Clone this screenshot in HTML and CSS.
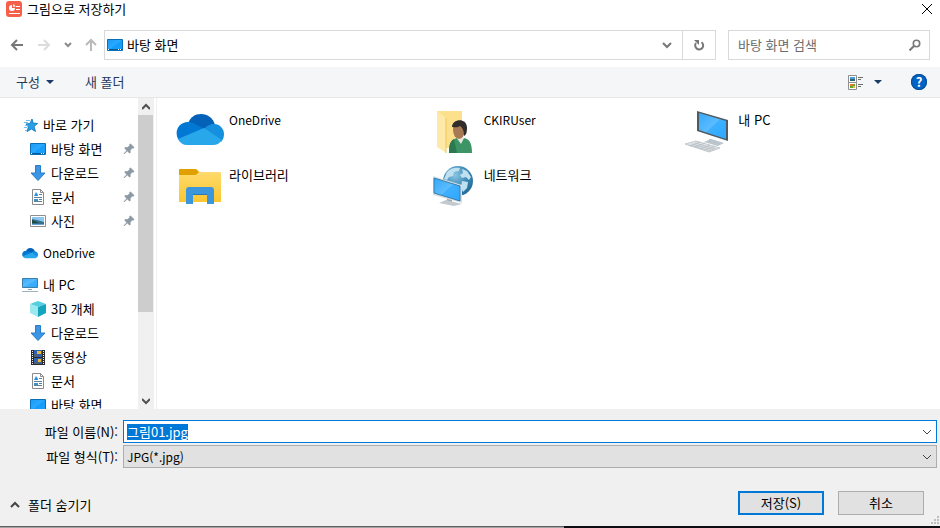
FILE: index.html
```html
<!DOCTYPE html>
<html lang="ko">

<head>
    <meta charset="UTF-8">
    <meta name="viewport" content="width=device-width, initial-scale=1.0">
    <title>그림으로 저장하기</title>
    <link rel="stylesheet" href="styles.css">
</head>

<body>
    <!-- shared icons -->
    <svg class="defs" width="0" height="0">
        <linearGradient id="blue" x1="0" y1="0" x2="1" y2="1">
            <stop offset="0" stop-color="#1a9bf5" />
            <stop offset=".5" stop-color="#2aa9ff" />
            <stop offset=".51" stop-color="#159dfb" />
            <stop offset="1" stop-color="#1a9fff" />
        </linearGradient>
        <linearGradient id="screen" x1="0" y1="0" x2="1" y2="1">
            <stop offset="0" stop-color="#35a9fa" />
            <stop offset=".5" stop-color="#5cbcff" />
            <stop offset=".51" stop-color="#3fb0ff" />
            <stop offset="1" stop-color="#2ea7ff" />
        </linearGradient>
        <linearGradient id="folder" x1="0" y1="0" x2="0" y2="1">
            <stop offset="0" stop-color="#ffdc72" />
            <stop offset="1" stop-color="#fbc62f" />
        </linearGradient>
        <radialGradient id="globe" cx=".4" cy=".3" r=".8">
            <stop offset="0" stop-color="#8cc6e3" />
            <stop offset=".5" stop-color="#3f8bb7" />
            <stop offset="1" stop-color="#1d6491" />
        </radialGradient>
        <symbol id="desktop" viewBox="0 0 16 16">
            <path d="M.5 2.500h15v11H.5z" fill="url(#blue)" stroke="#0870b8" />
            <path d="M1 12h14v1H1z" fill="#075a96" />
            <path d="M1 12h1v1H1zM11 12h1v1h-1zM13 12h1v1h-1z" fill="#fff" />
        </symbol>
        <symbol id="down" viewBox="0 0 16 16">
            <path d="M5.500.5h5v7.500h4.500L8 15.500 1 8h4.500z" fill="#3a96e4" stroke="#2b7cc4" />
        </symbol>
        <symbol id="doc" viewBox="0 0 16 16">
            <path d="M2.500.5h8l3 3v12h-11z" fill="#fff" stroke="#8b8b8b" />
            <path d="M10.500.5v3h3" fill="none" stroke="#8b8b8b" />
            <path d="M4 7l2-4 2 3v1z" fill="#2a8fd8" />
            <path d="M9 5.500h3M4 8.500h8M9 10.500h3M4 12.500h8" stroke="#5b7f9c" />
            <path d="M4 10h4v2H4z" fill="#3b93c9" />
        </symbol>
        <symbol id="pin" viewBox="0 0 12 12">
            <path d="M7.500.5l4 4-1 1-1-.2-2 2 .2 2.200-1.200 1L4.300 8.300 1.500 11H.8v-.8L3.500 7.500 1.300 5.300l1-1.200 2.200.2 2-2-.2-1z" fill="#8d9aa5" />
        </symbol>
        <symbol id="cloud" viewBox="0 0 48 32">
            <path d="M12 11C14 4 19 1 25 1c7 0 12 4 14 11L28 17z" fill="#0461b8" />
            <path d="M2 26C-2 18 3 9 12 9c4 0 6 1 9 3l9 5L4 28z" fill="#0078d4" />
            <path d="M28 16c2-3 6-5 10-5 6 0 10 5 10 10 0 3-1 6-3 8z" fill="#1490df" />
            <path d="M2 26l26-11 18 12c-2 3-5 5-9 5H11c-4 0-7-2-9-6z" fill="#28a8ea" />
        </symbol>
    </svg>

    <header class="titlebar">
        <svg class="app-icon" width="16" height="16" viewBox="0 0 16 16">
            <rect width="16" height="16" rx="3" fill="#f5604b" />
            <path d="M6 4a3 3 0 1 0 3 3H6z" fill="#fff" />
            <path d="M7 3a3 3 0 0 1 2.500 3H7z" fill="#ffd9d2" />
            <path d="M10 5.500h4M10 8.500h4M3 12.500h11" stroke="#fff" />
        </svg>
        <h1>그림으로 저장하기</h1>
        <button type="button" class="icon-btn" aria-label="닫기">
            <svg width="12" height="12" viewBox="0 0 12 12"><path d="M1 1l10 10M11 1L1 11" stroke="#000" fill="none" /></svg>
        </button>
    </header>

    <div class="navbar">
        <div class="arrows">
            <button type="button" class="icon-btn" aria-label="뒤로">
                <svg width="14" height="14" viewBox="0 0 14 14"><path d="M13 7H2M7 2L2 7l5 5" stroke="#777" stroke-width="2" fill="none" /></svg>
            </button>
            <button type="button" class="icon-btn" aria-label="앞으로">
                <svg width="14" height="14" viewBox="0 0 14 14"><path d="M1 7h11M7 2l5 5-5 5" stroke="#dcdcdc" stroke-width="2" fill="none" /></svg>
            </button>
            <button type="button" class="icon-btn" aria-label="최근 위치">
                <svg width="8" height="8" viewBox="0 0 8 8"><path d="M1 2l3 3 3-3" stroke="#8a8a8a" stroke-width="2" fill="none" /></svg>
            </button>
            <button type="button" class="icon-btn" aria-label="위로">
                <svg width="12" height="14" viewBox="0 0 12 14"><path d="M6 13V2M1 7l5-5 5 5" stroke="#b9b9b9" stroke-width="2" fill="none" /></svg>
            </button>
        </div>
        <div class="address">
            <svg width="16" height="16"><use href="#desktop" /></svg>
            <span class="path">바탕 화면</span>
            <button type="button" class="icon-btn drop" aria-label="이전 위치">
                <svg width="10" height="10" viewBox="0 0 10 10"><path d="M1 3l4 4 4-4" stroke="#777" stroke-width="2" fill="none" /></svg>
            </button>
            <button type="button" class="icon-btn refresh" aria-label="새로 고침">
                <svg width="12" height="12" viewBox="0 0 12 12"><path d="M8.500 3.200A4 4 0 1 1 3 4" stroke="#777" stroke-width="2" fill="none" /><path d="M1 1h5v5z" fill="#777" /></svg>
            </button>
        </div>
        <div class="search">
            <input type="search" placeholder="바탕 화면 검색" aria-label="바탕 화면 검색">
            <svg width="12" height="12" viewBox="0 0 12 12"><circle cx="7.500" cy="4.500" r="3.200" fill="none" stroke="#777" stroke-width="1.600" /><path d="M5 7l-4.500 4.500" stroke="#777" stroke-width="2" /></svg>
        </div>
    </div>

    <div class="toolbar">
        <button type="button" class="tool">구성
            <svg width="8" height="5" viewBox="0 0 8 5"><path d="M0 0h8L4 4z" fill="#1b3a66" /></svg>
        </button>
        <button type="button" class="tool">새 폴더</button>
        <button type="button" class="tool view" aria-label="보기 변경">
            <svg width="15" height="15" viewBox="0 0 15 15">
                <path d="M.5.5h8v7h-8zM.5 7.500h8v7h-8z" fill="#fff" stroke="#8e8e8e" />
                <path d="M2 2h5v2H2z" fill="#4a9be0" /><path d="M2 4h5v2H2z" fill="#2b6470" />
                <path d="M2 9h3v2H2z" fill="#e57b28" /><path d="M5 9h2v2H5zM2 11h3v2H2z" fill="#62a834" /><path d="M5 11h2v2H5z" fill="#e0bd36" />
                <path d="M10 2.500h5M10 4.500h3M10 9.500h5M10 11.500h3" stroke="#6e6e6e" />
            </svg>
            <svg width="8" height="5" viewBox="0 0 8 5"><path d="M0 0h8L4 4z" fill="#1b3a66" /></svg>
        </button>
        <button type="button" class="help" aria-label="도움말">?</button>
    </div>

    <main class="browser">
        <nav class="tree">
            <ul>
                <li class="top"><a href="#">
                    <svg width="16" height="16" viewBox="0 0 16 16"><path d="M10 2l1 4 4.500.5L12 9.500l1.500 5L9.500 12 5 14.500 6.500 10 4 7l4-.5z" fill="#2b9fe6" stroke="#1a82c6" /><path d="M4 3.500h4M2 5.500h4M3 8.500h3M2 10.500h3M3 13.500h2" stroke="#6fc0f0" /></svg>
                    바로 가기</a></li>
                <li><a href="#"><svg width="16" height="16"><use href="#desktop" /></svg>바탕 화면</a><svg class="pin" width="12" height="12"><use href="#pin" /></svg></li>
                <li><a href="#"><svg width="16" height="16"><use href="#down" /></svg>다운로드</a><svg class="pin" width="12" height="12"><use href="#pin" /></svg></li>
                <li><a href="#"><svg width="16" height="16"><use href="#doc" /></svg>문서</a><svg class="pin" width="12" height="12"><use href="#pin" /></svg></li>
                <li><a href="#">
                    <svg width="16" height="16" viewBox="0 0 16 16"><path d="M.5 2.500h15v11H.5z" fill="#fff" stroke="#8f8f8f" /><path d="M2 4h12v8H2z" fill="#8ec6f2" /><path d="M2 6l5 1 7 2v3H2z" fill="#37708c" /><path d="M2 7l7 3H2z" fill="#1f4b3f" /><path d="M2 11h12v1H2z" fill="#6da4cf" /></svg>
                    사진</a><svg class="pin" width="12" height="12"><use href="#pin" /></svg></li>
            </ul>
            <ul>
                <li class="top"><a class="latin" href="#"><svg width="16" height="16"><use href="#cloud" /></svg>OneDrive</a></li>
            </ul>
            <ul>
                <li class="top"><a href="#">
                    <svg width="16" height="16" viewBox="0 0 16 16"><path d="M.5 1.500h15v9H.5z" fill="url(#screen)" stroke="#3c7fa9" /><path d="M6 12h4v1H6z" fill="#88a4b3" /><path d="M0 14h16v1H0z" fill="#9fb2bd" /></svg>
                    내 PC</a></li>
                <li><a href="#">
                    <svg width="16" height="16" viewBox="0 0 16 16"><path d="M0 3l8-3 8 3-8 3z" fill="#54cfe0" /><path d="M0 3l8 3v10l-8-4z" fill="#9be8ee" /><path d="M16 3L8 6v10l8-4z" fill="#12a5bd" /></svg>
                    3D 개체</a></li>
                <li><a href="#"><svg width="16" height="16"><use href="#down" /></svg>다운로드</a></li>
                <li><a href="#">
                    <svg width="16" height="16" viewBox="0 0 16 16"><path d="M1 1h14v15H1z" fill="#2c2c2c" /><path d="M4 1h8v7H4zM4 9h8v6H4z" fill="#2f62b5" /><path d="M7 2h4v3H7zM8 10h3v3H8z" fill="#e7b93d" /><path d="M4 5h3v3H4zM4 13h5v2H4z" fill="#4b607c" /><path d="M2.500 2v14M13.500 2v14" stroke="#eee" stroke-dasharray="1 1" /></svg>
                    동영상</a></li>
                <li><a href="#"><svg width="16" height="16"><use href="#doc" /></svg>문서</a></li>
                <li><a href="#"><svg width="16" height="16"><use href="#desktop" /></svg>바탕 화면</a></li>
            </ul>
        </nav>
        <div class="scrollbar">
            <button type="button" class="icon-btn" aria-label="위로 스크롤"><svg width="8" height="8" viewBox="0 0 8 8"><path d="M0 6l4-4 4 4" stroke="#505050" stroke-width="2" fill="none" /></svg></button>
            <div class="track"><div class="thumb"></div></div>
            <button type="button" class="icon-btn" aria-label="아래로 스크롤"><svg width="8" height="8" viewBox="0 0 8 8"><path d="M0 2l4 4 4-4" stroke="#505050" stroke-width="2" fill="none" /></svg></button>
        </div>

        <div class="files">
            <a class="file latin" href="#">
                <svg width="48" height="48" viewBox="0 0 48 48"><use href="#cloud" y="6" width="48" height="32" /></svg>
                <span>OneDrive</span>
            </a>
            <a class="file latin" href="#">
                <svg width="48" height="48" viewBox="0 0 48 48">
                    <path d="M6 4h25v37H14z" fill="#fce08c" />
                    <path d="M6 4l9 7v35l-9-6z" fill="#ffe9a8" />
                    <path d="M15 11v35" stroke="#ecc564" />
                    <path d="M18 46c0-9 2-13 8-15l4 2 3-2c5 1 8 4 8 15z" fill="#3d9566" />
                    <path d="M18 46c0-8 1-12 5-14l3 14z" fill="#2b7950" />
                    <path d="M25 30l4-2 4 3-3 6z" fill="#e8e8df" />
                    <ellipse cx="28" cy="23" rx="6" ry="9" fill="#a77955" />
                    <path d="M21 20c0-8 14-10 15 0 0 6-1 8-3 9 0-5-1-8-4-10-3 2-5 1-8 1z" fill="#302d2b" />
                </svg>
                <span>CKIRUser</span>
            </a>
            <a class="file" href="#">
                <svg width="48" height="48" viewBox="0 0 48 48">
                    <path d="M24 32l7 2v3l-7-2z" fill="#9ca8b0" />
                    <path d="M19 35l7-3 13 4-6 3z" fill="#bac4ca" />
                    <path d="M12 4l31 9v21L12 24z" fill="#505a60" />
                    <path d="M14 6l27 8v18L14 23z" fill="url(#screen)" />
                    <path d="M0 37l11-3 24 7-11 4z" fill="#e1e5e8" stroke="#c4cace" />
                    <path d="M4 38l22 6M7 37l22 6M10 36l21 6M5 39l10-4M10 40l10-4M15 42l10-4M20 43l10-4" stroke="#bcc3c8" />
                </svg>
                <span>내 PC</span>
            </a>
            <a class="file" href="#">
                <svg width="48" height="48" viewBox="0 0 48 48">
                    <path d="M3 8q0-1 1-1h16l4 3h20q1 0 1 1v29H3z" fill="url(#folder)" />
                    <path d="M3 13V8q0-1 1-1h16l3 3-2 2q-1 1-2 1z" fill="#dfa000" />
                    <path d="M10 42V28q0-3 3-3h22q3 0 3 3v14h-7V32H17v10z" fill="#3c96dc" />
                    <path d="M17 32h14v1H17z" fill="#2578ba" />
                </svg>
                <span>라이브러리</span>
            </a>
            <a class="file" href="#">
                <svg width="48" height="48" viewBox="0 0 48 48">
                    <circle cx="27" cy="19" r="15" fill="url(#globe)" />
                    <path d="M16 10c3-4 9-5 13-4l-1 3-5 1-1 4-4 1-2 3-3-1zM31 7l5 2 4 6-2 3-3-3-4 1-2-3 3-2zM31 19l6 1-1 6-4 4-2-5z" fill="#bfe0ee" />
                    <path d="M16 35l5 2v4l-5-2z" fill="#9ca8b0" />
                    <path d="M8 41l7-3 16 4-8 2z" fill="#c2cad0" />
                    <path d="M2 14l29 9v18L2 33z" fill="#d8dee2" />
                    <path d="M3 16l26 8v15L3 31z" fill="url(#screen)" stroke="#357fae" />
                </svg>
                <span>네트워크</span>
            </a>
        </div>
    </main>

    <form class="save" name="frm">
        <label for="fileName">파일 이름(N):</label>
        <div class="combo">
            <input type="text" id="fileName" value="그림01.jpg" autocomplete="off" spellcheck="false">
            <button type="button" class="icon-btn" aria-label="이전 파일 이름">
                <svg width="10" height="6" viewBox="0 0 10 6"><path d="M1 1l4 4 4-4" stroke="#444" fill="none" /></svg>
            </button>
        </div>
        <label for="fileType">파일 형식(T):</label>
        <div class="type">
            <select id="fileType" class="latin">
                <option>JPG(*.jpg)</option>
            </select>
            <svg width="10" height="6" viewBox="0 0 10 6"><path d="M1 1l4 4 4-4" stroke="#444" fill="none" /></svg>
        </div>
        <div class="actions">
            <button type="button" class="hide">
                <svg width="10" height="8" viewBox="0 0 10 8"><path d="M1 6l4-4 4 4" stroke="#444" stroke-width="2" fill="none" /></svg>
                폴더 숨기기
            </button>
            <button type="submit" class="btn primary">저장(S)</button>
            <button type="button" class="btn">취소</button>
        </div>
        <svg class="grip" width="8" height="8" viewBox="0 0 8 8"><path d="M6 0h2v2H6zM3 3h2v2H3zM6 3h2v2H6zM0 6h2v2H0zM3 6h2v2H3zM6 6h2v2H6z" fill="#bfbfbf" /></svg>
    </form>
    <div class="edge"></div>

    <script>
        var fileName = document.getElementById("fileName");
        fileName.focus();
        fileName.select();
    </script>
</body>

</html>
```

FILE: styles.css
```css
* {
    box-sizing: border-box;
}

body {
    display: flex;
    flex-direction: column;
    height: 100vh;
    margin: 0;
    overflow: hidden;
    background-color: #fff;
    color: #000;
    font: 13px/20px "Noto Sans CJK KR", sans-serif;
}

button,
input,
select {
    margin: 0;
    padding: 0;
    border: 0;
    border-radius: 0;
    background: none;
    color: inherit;
    font: inherit;
}

a {
    color: inherit;
    text-decoration: none;
}

svg {
    flex: none;
    display: block;
}

.defs {
    position: absolute;
}

.latin {
    font-size: 12px;
}

.icon-btn {
    display: flex;
    align-items: center;
    justify-content: center;
}

/* title */
.titlebar {
    display: flex;
    align-items: center;
    height: 18px;
    padding: 0 7px 0 6px;
}

.titlebar h1 {
    flex: 1;
    margin: 0 0 0 5px;
    font-size: 13px;
    font-weight: normal;
}

/* address bar */
.navbar {
    display: flex;
    align-items: center;
    padding: 12px 10px 7px;
}

.arrows {
    display: flex;
    align-items: center;
    justify-content: space-between;
    width: 87px;
    margin-right: 7px;
}

.address {
    display: flex;
    flex: 1;
    align-items: center;
    height: 30px;
    padding-left: 2px;
    border: 1px solid #d9d9d9;
}

.path {
    flex: 1;
    margin-left: 4px;
}

.drop {
    width: 30px;
    height: 28px;
}

.refresh {
    width: 33px;
    height: 28px;
    border-left: 1px solid #d9d9d9;
}

.search {
    display: flex;
    align-items: center;
    width: 202px;
    height: 30px;
    margin-left: 12px;
    padding: 0 8px 0 9px;
    border: 1px solid #d9d9d9;
}

.search input {
    flex: 1;
    min-width: 0;
    outline: 0;
    appearance: none;
}

.search input::placeholder {
    color: #6d6d6d;
}

/* toolbar */
.toolbar {
    display: flex;
    align-items: center;
    height: 31px;
    padding: 0 13px 0 16px;
    border-bottom: 1px solid #e6e7e8;
    background-color: #f4f6f8;
    color: #1e395b;
}

.tool {
    display: flex;
    align-items: center;
    gap: 6px;
    margin-right: 31px;
}

.view {
    gap: 11px;
    margin-left: auto;
    margin-right: 29px;
}

.help {
    width: 16px;
    height: 16px;
    border-radius: 50%;
    background-color: #0063c6;
    box-shadow: 0 0 0 1px #0a4a94 inset;
    color: #fff;
    font-weight: bold;
    line-height: 16px;
}

/* folder tree */
.browser {
    display: flex;
    flex: 1;
    min-height: 0;
}

.tree {
    width: 138px;
    padding-top: 15px;
    overflow: hidden;
}

.tree ul {
    margin: 0 0 8px;
    padding: 0;
    list-style: none;
}

.tree li {
    display: flex;
    align-items: center;
    justify-content: space-between;
    height: 24px;
    padding: 0 3px 0 30px;
}

.tree .top {
    padding-left: 22px;
}

.tree a {
    display: flex;
    align-items: center;
    gap: 5px;
}

.scrollbar {
    display: flex;
    flex-direction: column;
    width: 16px;
    background-color: #f0f0f0;
}

.scrollbar .icon-btn {
    height: 17px;
}

.track {
    flex: 1;
}

.thumb {
    width: 15px;
    height: 71%;
    background-color: #cdcdcd;
}

/* file list */
.files {
    display: grid;
    flex: 1;
    grid-template-columns: repeat(3, 1fr);
    grid-auto-rows: 55px;
    margin-left: 2px;
    padding: 9px 0 0 19px;
    border-left: 1px solid #f0f0f0;
}

.file {
    display: flex;
    align-items: flex-start;
    gap: 5px;
}

.file span {
    padding-top: 3px;
}

/* file name, type and buttons */
.save {
    position: relative;
    display: grid;
    grid-template-columns: 118px 1fr;
    align-items: center;
    gap: 2px 5px;
    padding: 11px 3px 11px 0;
    background-color: #f0f0f0;
}

.save label {
    text-align: right;
}

.combo,
.type {
    display: flex;
    align-items: center;
    height: 23px;
    border: 1px solid #0078d7;
    background-color: #fff;
}

.combo input {
    flex: 1;
    min-width: 0;
    padding-left: 3px;
    outline: 0;
    line-height: 16px;
}

.combo input::selection {
    background-color: #0078d7;
    color: #fff;
}

.combo .icon-btn {
    width: 18px;
    height: 21px;
}

.type {
    border-color: #adadad;
    background-color: #e1e1e1;
}

.type select {
    flex: 1;
    height: 21px;
    margin-right: -14px;
    padding-left: 3px;
    appearance: none;
}

.type svg {
    margin-right: 4px;
    pointer-events: none;
}

.actions {
    display: flex;
    grid-column: 1 / 3;
    align-items: center;
    gap: 14px;
    margin-top: 21px;
    padding: 0 13px 0 10px;
}

.hide {
    display: flex;
    align-items: center;
    gap: 8px;
    margin-top: 4px;
    margin-right: auto;
}

.btn {
    width: 86px;
    height: 24px;
    border: 1px solid #adadad;
    background-color: #e1e1e1;
}

.primary {
    border: 2px solid #0078d7;
}

.grip {
    position: absolute;
    right: 1px;
    bottom: 2px;
}

.edge {
    height: 2px;
    background: linear-gradient(to right, transparent 60%, #0d0d14 60%), linear-gradient(#5f5f5f 50%, #a5a2a2 50%);
}
```
